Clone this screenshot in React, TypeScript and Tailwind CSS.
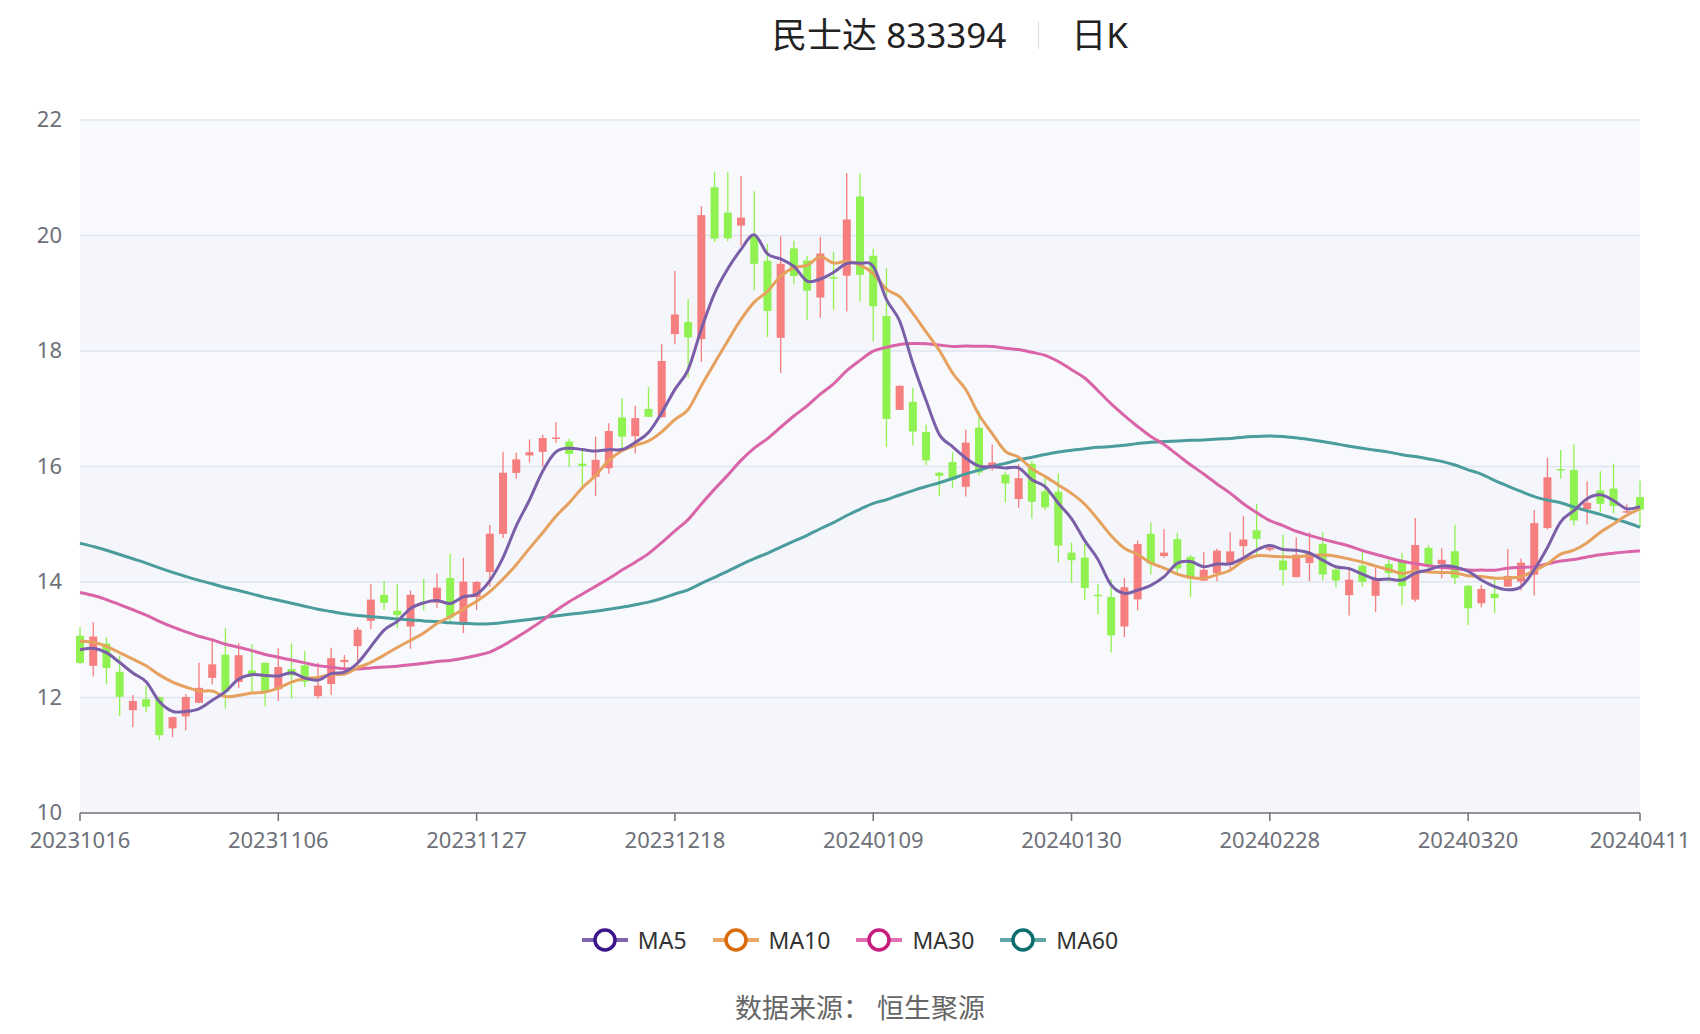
import React from "react";

const KP: [number, number][] = [
  [0, 13.0], [3, 12.3], [6, 11.5], [9, 11.8], [10, 12.4], [13, 12.3], [16, 12.1], [19, 12.8], [22, 13.3], [26, 13.5],
  [29, 13.8], [31, 15.0], [33, 16.0], [35, 16.5], [37, 16.0], [39, 16.2], [42, 16.9], [44, 17.6], [46, 18.7], [47, 20.0],
  [48, 19.8], [50, 20.2], [52, 19.2], [55, 18.7], [57, 19.7], [59, 19.5], [61, 17.5], [63, 16.6], [65, 15.6], [67, 16.1],
  [70, 16.0], [72, 15.3], [74, 14.7], [76, 13.8], [78, 13.4], [80, 14.3], [84, 14.4], [86, 14.2], [88, 14.8], [90, 14.9],
  [92, 14.3], [95, 13.7], [98, 13.8], [101, 14.3], [103, 14.2], [105, 13.5], [107, 13.6], [109, 14.4], [111, 15.9],
  [113, 15.4], [115, 15.0], [118, 15.6],
];
const N = 119;
function interp(i: number) {
  if (i >= 118) return KP[KP.length - 1][1];
  for (let k = 0; k < KP.length - 1; k++) {
    const [a, pa] = KP[k], [b, pb] = KP[k + 1];
    if (i >= a && i <= b) return pa + ((pb - pa) * (i - a)) / (b - a || 1);
  }
  return KP[KP.length - 1][1];
}
let seed = 11;
const rnd = () => { seed = (seed * 16807) % 2147483647; return seed / 2147483647; };

const candles: { o: number; c: number; h: number; l: number }[] = [];
let prev = 13.1;
for (let i = 0; i < N; i++) {
  const base = interp(i);
  const vol = i > 44 && i < 62 ? 1.4 : 0.8;
  const c = base + (rnd() - 0.5) * vol;
  const o = prev + (rnd() - 0.5) * vol * 0.7;
  const h = Math.max(o, c) + rnd() * vol * 0.6;
  const l = Math.min(o, c) - rnd() * vol * 0.5;
  candles.push({ o, c, h: Math.min(h, 22), l });
  prev = c;
}
const hist: number[] = [];
for (let i = 0; i < 60; i++) hist.push(16.4 - (i / 60) * 3.4 + Math.sin(i / 5) * 0.3);
const closes = [...hist, ...candles.map((d) => d.c)];
function ma(n: number) {
  const out: number[] = [];
  for (let i = 0; i < N; i++) {
    const j = i + 60;
    let s = 0;
    for (let k = j - n + 1; k <= j; k++) s += closes[k];
    out.push(s / n);
  }
  return out;
}
const L = 80, R = 1640, step = (R - L) / 118;
const X = (i: number) => L + i * step;
const Y = (p: number) => 743 - (p - 10) * (693 / 12);

function path(v: number[]) {
  const pts = v.map((p, i) => [X(i), Y(p)]);
  let d = `M${pts[0][0]},${pts[0][1]}`;
  for (let i = 1; i < pts.length; i++) {
    const p0 = pts[i - 2] || pts[i - 1], p1 = pts[i - 1], p2 = pts[i], p3 = pts[i + 1] || p2;
    const c1x = p1[0] + (p2[0] - p0[0]) / 6, c1y = p1[1] + (p2[1] - p0[1]) / 6;
    const c2x = p2[0] - (p3[0] - p1[0]) / 6, c2y = p2[1] - (p3[1] - p1[1]) / 6;
    d += ` C${c1x},${c1y} ${c2x},${c2y} ${p2[0]},${p2[1]}`;
  }
  return d;
}
const lines = [
  { n: 60, c: "#4b9c9c" },
  { n: 30, c: "#d964a8" },
  { n: 10, c: "#e6a15e" },
  { n: 5, c: "#7b5ea8" },
];
const ticks = ["20231016", "20231106", "20231127", "20231218", "20240109", "20240130", "20240228", "20240320", "20240411"];
const legend = [
  { t: "MA5", l: "#8064ad", c: "#3b1589" },
  { t: "MA10", l: "#eba86a", c: "#d96b0c" },
  { t: "MA30", l: "#e070b0", c: "#c81d7e" },
  { t: "MA60", l: "#5fa5a5", c: "#0b6e6e" },
];
const font = { fontFamily: '"Noto Sans","Noto Sans CJK SC",sans-serif' };

export default function App() {
  return (
    <div className="w-[1700px] h-[1034px] bg-white overflow-hidden" style={font}>
      <div className="h-[70px] flex items-center justify-center pl-[200px] text-[35px] text-[#222]">
        <span>民士达 833394</span>
        <span className="mx-[32px] w-[1px] h-[28px] bg-[#ddd]" />
        <span>日K</span>
      </div>
      <svg width="1700" height="800" className="block">
        {[0, 1, 2, 3, 4, 5].map((k) => (
          <rect key={k} x={L} y={Y(12 + k * 2)} width={R - L} height={Y(10) - Y(12)} fill={k % 2 === 0 ? "#f5f6fb" : "#f8f9fc"} />
        ))}
        {[10, 12, 14, 16, 18, 20, 22].map((p) => (
          <g key={p}>
            {p > 10 && <line x1={L} x2={R} y1={Y(p)} y2={Y(p)} stroke="#e0e6f1" strokeWidth="1.5" />}
            <text x={62} y={Y(p) + 7} textAnchor="end" fontSize="22" fill="#6e7079" style={font}>{p}</text>
          </g>
        ))}
        {candles.map((d, i) => {
          const up = d.c >= d.o;
          const col = up ? "#f77e7e" : "#8ff251";
          const top = Y(Math.max(d.o, d.c)), bot = Y(Math.min(d.o, d.c));
          return (
            <g key={i}>
              <line x1={X(i)} x2={X(i)} y1={Y(d.h)} y2={Y(d.l)} stroke={col} strokeWidth="1.3" />
              <rect x={X(i) - 4} y={top} width="8" height={Math.max(1.5, bot - top)} fill={col} />
            </g>
          );
        })}
        {lines.map((l) => (
          <path key={l.n} d={path(ma(l.n))} fill="none" stroke={l.c} strokeWidth="3" strokeLinejoin="round" />
        ))}
        <line x1={L} x2={R} y1={Y(10)} y2={Y(10)} stroke="#6e7079" strokeWidth="1.5" />
        {ticks.map((t, k) => {
          const x = k === 8 ? R : X(k * 15);
          return (
            <g key={t}>
              <line x1={x} x2={x} y1={Y(10)} y2={Y(10) + 8} stroke="#6e7079" strokeWidth="1.5" />
              <text x={Math.min(x, 1648)} y={Y(10) + 35} textAnchor="middle" fontSize="22" fill="#6e7079" style={font}>{t}</text>
            </g>
          );
        })}
      </svg>
      <div className="flex items-center justify-center gap-[26px] mt-[50px] h-[40px] text-[23px] text-[#333]">
        {legend.map((g) => (
          <div key={g.t} className="flex items-center gap-[10px]">
            <svg width="46" height="30">
              <line x1="0" x2="46" y1="15" y2="15" stroke={g.l} strokeWidth="4" />
              <circle cx="23" cy="15" r="10" fill="white" stroke={g.c} strokeWidth="3.5" />
            </svg>
            <span>{g.t}</span>
          </div>
        ))}
      </div>
      <div className="flex justify-center mt-[28px] text-[27px] leading-[40px] text-[#666] pl-[20px]">
        数据来源：&nbsp;恒生聚源
      </div>
    </div>
  );
}
